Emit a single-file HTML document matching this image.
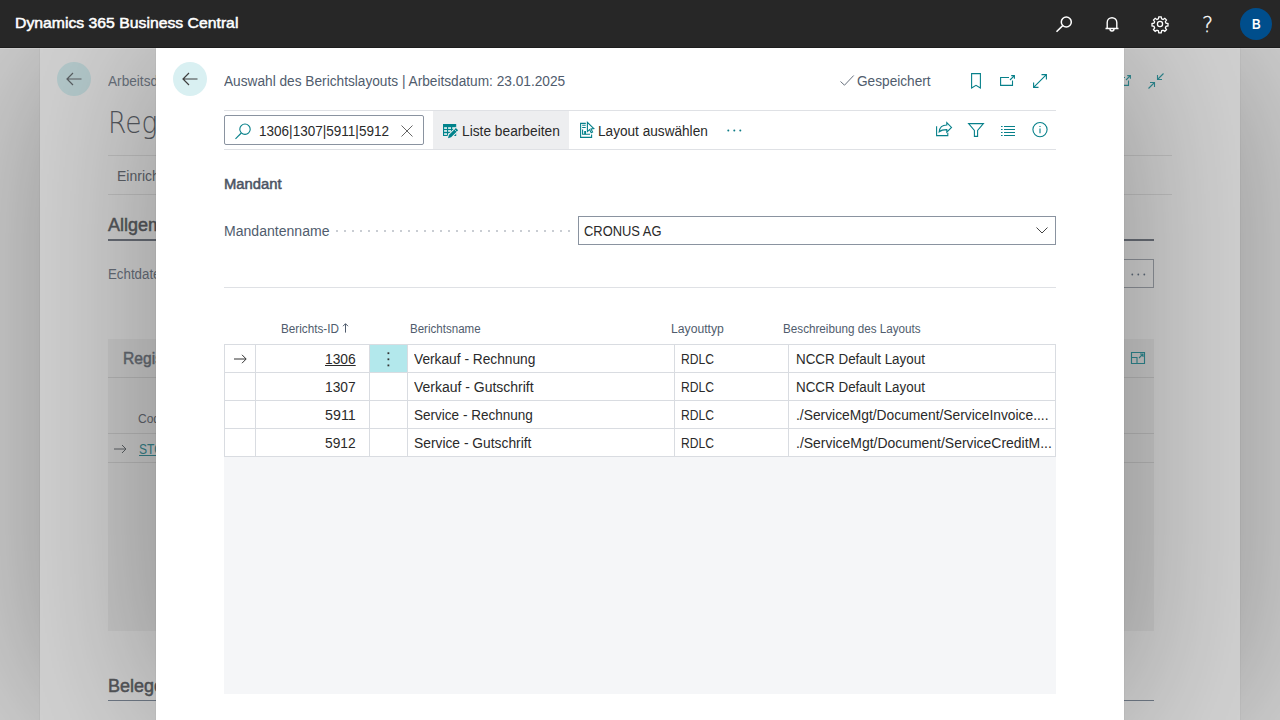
<!DOCTYPE html>
<html lang="de">
<head>
<meta charset="utf-8">
<title>Auswahl des Berichtslayouts</title>
<style>
*{box-sizing:border-box;margin:0;padding:0}
html,body{width:1280px;height:720px;overflow:hidden}
body{font-family:"Liberation Sans",sans-serif;font-size:14px;color:#2a2a2a;background:#d2d2d2;position:relative}
.t{position:absolute;white-space:nowrap;line-height:20px;height:20px;transform-origin:0 50%}
svg{position:absolute;overflow:visible;fill:none}
.pg{position:absolute;width:1280px;height:720px}
#top{position:absolute;left:0;top:0;width:1280px;height:48px;background:#272727;border-bottom:1px solid #1d1d1d}
#topln{position:absolute;left:0;top:48px;width:1280px;height:1px;background:rgba(255,255,255,.18)}
#back{position:absolute;left:40px;top:48px;width:1200px;height:672px;background:#d2d2d2;box-shadow:0 0 0 1px rgba(0,0,0,.03),0 0 162px rgba(0,0,0,.33)}
#back .clip{position:absolute;left:0;top:0;width:1200px;height:672px;overflow:hidden}
#back .pg{left:-40px;top:-48px}
#back .ln{position:absolute;height:1px;background:rgba(0,0,0,.09)}
#back .dk{position:absolute;height:2px;background:#686d76}
#back .t{color:#5d6269}
#dlg{position:absolute;left:156px;top:48px;width:968px;height:672px;background:#fff}
#dsh{position:absolute;left:116px;top:0;width:968px;height:672px;box-shadow:0 0 0 1px rgba(0,0,0,.03),0 0 162px rgba(0,0,0,.33)}
#dlg .pg{left:-156px;top:-48px}
.hl{position:absolute;height:1px;background:#dfe1e5}
.vl{position:absolute;width:1px;background:#d9dce1}
.g{color:#505c6d}
.k{stroke:#07808a;stroke-width:1.1}
</style>
</head>
<body>
<div id="back"><div class="clip"><div class="pg">
<div style="position:absolute;left:57px;top:62px;width:34px;height:34px;border-radius:17px;background:#b4c9cb"></div>
<svg style="left:66px;top:72px" width="16" height="14" viewBox="0 0 16 14" stroke="#5a5f63" stroke-width="1.2"><path d="M15.5 7 H1 M7 1 L1 7 L7 13"/></svg>
<div class="t" style="left:108px;top:71px;color:#69717c;transform:scaleX(.975)">Arbeitsdatum</div>
<div class="t" style="left:108px;top:100.5px;font-family:'DejaVu Sans Light','Liberation Sans',sans-serif;font-size:29.5px;line-height:44px;height:44px;color:#55595f;transform:scaleX(.9)">Regis</div>
<div class="ln" style="left:108px;top:155px;width:1064px"></div>
<div class="t" style="left:117px;top:166px">Einrichtung</div>
<div class="ln" style="left:108px;top:194px;width:1064px"></div>
<div class="t" style="left:108px;top:213px;font-size:18px;-webkit-text-stroke:.5px #55575b;line-height:24px;height:24px;color:#55575b">Allgemein</div>
<div class="dk" style="left:108px;top:239px;width:1046px"></div>
<div class="t" style="left:108px;top:264px;color:#666d78;transform:scaleX(.95)">Echtdaten</div>
<div style="position:absolute;left:1116px;top:259px;width:38px;height:29px;border:1px solid #8e9299"></div>
<svg style="left:1131px;top:273px" width="15" height="3" viewBox="0 0 15 3"><circle cx="1.3" cy="1.5" r=".9" fill="#5d6a78"/><circle cx="7.3" cy="1.5" r=".9" fill="#5d6a78"/><circle cx="13.3" cy="1.5" r=".9" fill="#5d6a78"/></svg>
<div style="position:absolute;left:108px;top:339px;width:1046px;height:292px;background:rgba(0,0,0,.04)"></div>
<div class="t" style="left:123px;top:347px;font-size:17px;-webkit-text-stroke:.5px #646971;line-height:24px;height:24px;color:#646971;transform:scaleX(.92)">Regis</div>
<div class="ln" style="left:108px;top:377px;width:1046px"></div>
<div class="t" style="left:138px;top:409px;font-size:12px">Code</div>
<div class="ln" style="left:108px;top:433px;width:1046px"></div>
<svg style="left:114px;top:443.5px" width="13" height="10" viewBox="0 0 13 10" stroke="#5a5f63" stroke-width="1"><path d="M0 5 H12 M8 1 L12 5 L8 9"/></svg>
<div class="t" style="left:139px;top:439px;color:#357f87;text-decoration:underline;transform:scaleX(.86)">STO</div>
<div class="ln" style="left:108px;top:462px;width:1046px"></div>
<div class="t" style="left:108px;top:673.5px;font-size:18px;-webkit-text-stroke:.5px #55575b;line-height:24px;height:24px;color:#55575b">Belege</div>
<div class="dk" style="left:108px;top:700px;width:1046px;height:1px;background:#6f7986"></div>
<svg style="left:1116px;top:75px" width="15" height="11" viewBox="0 0 15 11" stroke="#2f8890" stroke-width="1.1"><path d="M9 2.5 H0.6 V10.4 H12.5 V5.5 M11.2 0.6 H14.4 V3.8 M14.4 0.6 L10 5"/></svg>
<svg style="left:1148px;top:73px" width="16" height="16" viewBox="0 0 16 16" stroke="#2f8890" stroke-width="1.1"><path d="M15.5 0.5 L9.5 6.5 M9.5 2 V6.5 H14 M0.5 15.5 L6.5 9.5 M2 9.5 H6.5 V14"/></svg>
<svg style="left:1131px;top:352px" width="14" height="12" viewBox="0 0 14 12" stroke="#2f8890" stroke-width="1.1"><path d="M0.5 0.5 H13.5 V11.5 H0.5z M6 11.5 V5.5 H0.5 M8 6 L12 2 M9 2 H12 V5"/></svg>
</div><div id="dsh"></div></div></div>
<div id="dlg"><div class="pg">
<div style="position:absolute;left:173px;top:62px;width:34px;height:34px;border-radius:17px;background:#d9f0f2"></div>
<svg style="left:182px;top:72px" width="16" height="14" viewBox="0 0 16 14" stroke="#404040" stroke-width="1.2"><path d="M15.5 7 H1 M7 1 L1 7 L7 13"/></svg>
<div class="t g" style="left:224px;top:71px;transform:scaleX(0.9771)">Auswahl des Berichtslayouts | Arbeitsdatum: 23.01.2025</div>
<svg style="left:840px;top:75px" width="14" height="11" viewBox="0 0 14 11" stroke="#68717e" stroke-width="1"><path d="M0.5 6.5 L4.5 10.2 L13.7 0.5"/></svg>
<div class="t g" style="left:857px;top:71px;transform:scaleX(0.9750)">Gespeichert</div>
<svg class="k" style="left:971px;top:73px" width="10" height="16" viewBox="0 0 10 16"><path d="M0.6 0.6 H9.4 V15 L5 12.4 L0.6 15z"/></svg>
<svg class="k" style="left:1000px;top:75px" width="15" height="11" viewBox="0 0 15 11"><path d="M9 2.5 H0.6 V10.4 H12.5 V5.5 M11.2 0.6 H14.4 V3.8 M14.4 0.6 L10 5"/></svg>
<svg class="k" style="left:1033px;top:74px" width="14" height="14" viewBox="0 0 14 14"><path d="M0.6 13.4 L13.4 0.6 M8.5 0.6 H13.4 V5.5 M0.6 8.5 V13.4 H5.5"/></svg>
<div class="hl" style="left:224px;top:110px;width:832px"></div>
<div class="hl" style="left:224px;top:149px;width:832px"></div>
<div style="position:absolute;left:224px;top:115px;width:200px;height:30px;border:1px solid #8a93a0;border-radius:2px"></div>
<svg class="k" style="left:235px;top:123px" width="16" height="16" viewBox="0 0 16 16" stroke-width="1"><circle cx="10" cy="6.2" r="5.2"/><path d="M6.3 10 L0.5 15.8"/></svg>
<div class="t" style="left:259px;top:121px;transform:scaleX(0.9669)">1306|1307|5911|5912</div>
<svg style="left:401px;top:125px" width="12" height="12" viewBox="0 0 12 12" stroke="#666" stroke-width="1"><path d="M0.5 0.5 L11.5 11.5 M11.5 0.5 L0.5 11.5"/></svg>
<div style="position:absolute;left:433px;top:111px;width:136px;height:38px;background:#edeef0"></div>
<svg style="left:443px;top:124px" width="16" height="15" viewBox="0 0 16 15"><rect x="0" y="0" width="13.2" height="12" fill="#00838c"/><g fill="#fff"><rect x="1.1" y="3.3" width="2.9" height="1.5"/><rect x="5.1" y="3.3" width="2.9" height="1.5"/><rect x="9.2" y="3.3" width="2.9" height="1.5"/><rect x="1.1" y="6.2" width="2.9" height="1.5"/><rect x="5.1" y="6.2" width="2.9" height="1.5"/><rect x="9.2" y="6.2" width="2.9" height="1.5"/><rect x="1.1" y="9.3" width="2.9" height="1.5"/><rect x="5.1" y="9.3" width="2.9" height="1.5"/></g><path d="M5 14.3 L5.87 11.07 L12.87 4.07 L15.13 6.33 L8.13 13.33z" fill="#00838c" stroke="#edeef0" stroke-width="2" style="paint-order:stroke"/><path d="M11.5 5.5 L13.7 7.7" stroke="#edeef0" stroke-width=".7"/></svg>
<div class="t" style="left:462px;top:121px;transform:scaleX(0.9815)">Liste bearbeiten</div>
<svg class="k" style="left:580px;top:122px" width="15" height="16" viewBox="0 0 15 16" stroke-width="1.2"><path d="M5.8 1.4 H0.6 V15.4 H11.6 V12.6 M2.2 3.2 H5.7 M2.2 5.5 H5.7 M2.6 7.4 V12.2 H10"/><rect x="4.2" y="9" width="1.8" height="3.2" fill="#00838c" stroke="none"/><path d="M7.4 0.4 V9.6 L9.6 7.6 L11.2 10.8 L12.6 10.1 L11 7 L13.8 6.6z" fill="#fff" stroke-width="1.1"/></svg>
<div class="t" style="left:598px;top:121px;transform:scaleX(0.9728)">Layout auswählen</div>
<svg style="left:727px;top:129px" width="15" height="3" viewBox="0 0 15 3"><circle cx="1.3" cy="1.5" r="1" fill="#0f7d87"/><circle cx="7.3" cy="1.5" r="1" fill="#0f7d87"/><circle cx="13.3" cy="1.5" r="1" fill="#0f7d87"/></svg>
<svg class="k" style="left:936px;top:122px" width="16" height="15" viewBox="0 0 16 15"><path d="M0.6 4.2 V13.6 H11.8 V10.8 M3.2 9.8 C3.6 5.6 6.6 3 10.8 3 V0.6 L15.5 5.4 L10.8 10.2 V7.6 C7.4 7.6 5 8.2 3.2 9.8z"/></svg>
<svg class="k" style="left:968px;top:123px" width="16" height="14" viewBox="0 0 16 14"><path d="M0.6 0.6 H15.4 L9.6 7.4 V13.4 H6.4 V7.4z"/></svg>
<svg class="k" style="left:1001px;top:126px" width="15" height="11" viewBox="0 0 15 11" stroke-width="1"><path d="M3 0.5 H14 M3 3.5 H14 M3 6.5 H14 M3 9.5 H14 M0 0.5 H1.6 M0 3.5 H1.6 M0 6.5 H1.6 M0 9.5 H1.6"/></svg>
<svg class="k" style="left:1031.5px;top:121.8px" width="16" height="16" viewBox="0 0 16 16"><circle cx="8" cy="7.6" r="7.1"/><path d="M8 6.4 V11.2 M8 3.9 V5" stroke-width="1.1"/></svg>
<div class="t" style="left:224px;top:174px;-webkit-text-stroke:.5px #4b5463;color:#4b5463;transform:scaleX(1.0572)">Mandant</div>
<div class="t g" style="left:224px;top:221px;transform:scaleX(1.0040)">Mandantenname</div>
<div style="position:absolute;left:336px;top:230px;width:235px;height:2px;background:repeating-linear-gradient(90deg,#c9cdd3 0,#c9cdd3 2px,transparent 2px,transparent 8px)"></div>
<div style="position:absolute;left:578px;top:216px;width:478px;height:29px;border:1px solid #8a93a0"></div>
<div class="t" style="left:584px;top:221px;transform:scaleX(0.9224)">CRONUS AG</div>
<svg style="left:1036px;top:227px" width="12" height="7" viewBox="0 0 12 7" stroke="#444" stroke-width="1"><path d="M0.5 0.5 L6 6 L11.5 0.5"/></svg>
<div class="hl" style="left:224px;top:287px;width:832px"></div>
<div class="t g" style="left:281px;top:319px;font-size:12px;transform:scaleX(0.9757)">Berichts-ID</div>
<svg style="left:342px;top:323px" width="7" height="10" viewBox="0 0 7 10" stroke="#505c6d" stroke-width="1"><path d="M3.5 9.6 V0.8 M1 3.2 L3.5 0.7 L6 3.2"/></svg>
<div class="t g" style="left:410px;top:319px;font-size:12px;transform:scaleX(0.9622)">Berichtsname</div>
<div class="t g" style="left:671px;top:319px;font-size:12px;transform:scaleX(1.0145)">Layouttyp</div>
<div class="t g" style="left:783px;top:319px;font-size:12px;transform:scaleX(0.9736)">Beschreibung des Layouts</div>
<div style="position:absolute;left:224px;top:344px;width:832px;height:350px;background:#f5f6f8"></div>
<div style="position:absolute;left:224px;top:344px;width:832px;height:113px;background:#fff"></div>
<div style="position:absolute;left:370px;top:345px;width:37px;height:27px;background:#b3e8ec"></div>
<div class="hl" style="left:224px;top:344px;width:832px;background:#d9dce1"></div>
<div class="hl" style="left:224px;top:372px;width:832px;background:#d9dce1"></div>
<div class="hl" style="left:224px;top:400px;width:832px;background:#d9dce1"></div>
<div class="hl" style="left:224px;top:428px;width:832px;background:#d9dce1"></div>
<div class="hl" style="left:224px;top:456px;width:832px;background:#d9dce1"></div>
<div class="vl" style="left:224px;top:344px;height:113px"></div>
<div class="vl" style="left:255px;top:344px;height:113px"></div>
<div class="vl" style="left:369px;top:344px;height:113px"></div>
<div class="vl" style="left:407px;top:344px;height:113px"></div>
<div class="vl" style="left:674px;top:344px;height:113px"></div>
<div class="vl" style="left:788px;top:344px;height:113px"></div>
<div class="vl" style="left:1055px;top:344px;height:113px"></div>
<svg style="left:234px;top:354px" width="13" height="10" viewBox="0 0 13 10" stroke="#333" stroke-width="1"><path d="M0 5 H12 M8 0.8 L12.2 5 L8 9.2"/></svg>
<svg style="left:387px;top:352px" width="3" height="15" viewBox="0 0 3 15" fill="#333"><rect x="0.5" y="0.3" width="1.8" height="1.8" fill="#333"/><rect x="0.5" y="6.4" width="1.8" height="1.8" fill="#333"/><rect x="0.5" y="12.5" width="1.8" height="1.8" fill="#333"/></svg>
<div class="t r" style="left:325px;top:349px;text-decoration:underline;transform:scaleX(0.9854)">1306</div>
<div class="t r" style="left:325px;top:377px;transform:scaleX(0.9854)">1307</div>
<div class="t r" style="left:325px;top:405px;transform:scaleX(1.0196)">5911</div>
<div class="t r" style="left:325px;top:433px;transform:scaleX(0.9854)">5912</div>
<div class="t" style="left:414px;top:349px;transform:scaleX(0.9810)">Verkauf - Rechnung</div>
<div class="t" style="left:414px;top:377px;transform:scaleX(0.9985)">Verkauf - Gutschrift</div>
<div class="t" style="left:414px;top:405px;transform:scaleX(0.9670)">Service - Rechnung</div>
<div class="t" style="left:414px;top:433px;transform:scaleX(0.9863)">Service - Gutschrift</div>
<div class="t" style="left:681px;top:349px;transform:scaleX(0.8630)">RDLC</div>
<div class="t" style="left:681px;top:377px;transform:scaleX(0.8630)">RDLC</div>
<div class="t" style="left:681px;top:405px;transform:scaleX(0.8630)">RDLC</div>
<div class="t" style="left:681px;top:433px;transform:scaleX(0.8630)">RDLC</div>
<div class="t" style="left:796px;top:349px;transform:scaleX(0.9575)">NCCR Default Layout</div>
<div class="t" style="left:796px;top:377px;transform:scaleX(0.9575)">NCCR Default Layout</div>
<div class="t" style="left:796px;top:405px;transform:scaleX(0.9863)">./ServiceMgt/Document/ServiceInvoice....</div>
<div class="t" style="left:796px;top:433px;transform:scaleX(0.9963)">./ServiceMgt/Document/ServiceCreditM...</div>
</div></div>
<div id="topln"></div>
<div id="top">
<div class="t" style="left:15px;top:11.5px;font-size:15px;-webkit-text-stroke:.5px #fff;color:#fff;line-height:22px;height:22px;transform:scaleX(1.0508)">Dynamics 365 Business Central</div>
<svg style="left:1056px;top:16px" width="16" height="16" viewBox="0 0 16 16" stroke="#fff" stroke-width="1.5"><circle cx="10.3" cy="6" r="5"/><path d="M6.7 9.6 L0.5 15.8"/></svg>
<svg style="left:1104px;top:16px" width="16" height="16" viewBox="0 0 16 16" stroke="#fff" stroke-width="1.4"><path d="M3.2 12.5 V6.5 a4.8 4.8 0 0 1 9.6 0 V12.5 M1.5 12.5 H14.5 M6 13 a2 2 0 0 0 4 0"/></svg>
<svg style="left:1152px;top:16px" width="16" height="16" viewBox="0 0 16 16" stroke="#fff" stroke-width="1.3"><circle cx="8" cy="8" r="2.6"/><path d="M6.8 0.8 h2.4 l.4 2 1.5 .65 1.7-1.15 1.7 1.7-1.15 1.7 .65 1.5 2 .4 v2.4 l-2 .4 -.65 1.5 1.15 1.7 -1.7 1.7 -1.7-1.15 -1.5 .65 -.4 2 h-2.4 l-.4-2 -1.5-.65 -1.7 1.15 -1.7-1.7 1.15-1.7 -.65-1.5 -2-.4 v-2.4 l2-.4 .65-1.5 -1.15-1.7 1.7-1.7 1.7 1.15 1.5-.65z"/></svg>
<div class="t" style="left:1202px;top:11.5px;font-family:'DejaVu Sans Light','Liberation Sans',sans-serif;font-size:21px;color:#fff;line-height:26px;height:26px;-webkit-text-stroke:.3px #fff">?</div>
<div style="position:absolute;left:1240px;top:8px;width:32px;height:32px;border-radius:16px;background:#004e8c"></div>
<div class="t" style="left:1251.5px;top:14px;font-size:14px;font-weight:bold;color:#fff;transform:scaleX(.86)">B</div>
</div>
</body>
</html>
